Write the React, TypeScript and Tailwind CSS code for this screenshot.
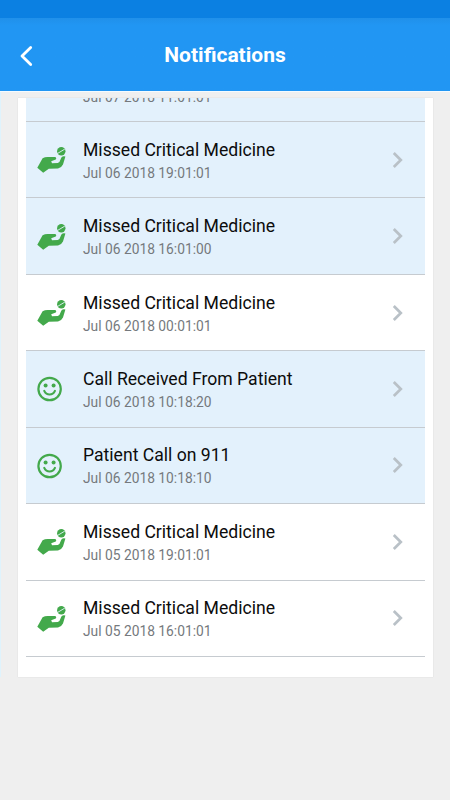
import React from "react";

type NotificationKind = "medicine" | "call";

type NotificationItem = {
  kind: NotificationKind;
  title: string;
  date: string;
  unread: boolean;
};

const notifications: NotificationItem[] = [
  { kind: "medicine", title: "Missed Critical Medicine", date: "Jul 06 2018 19:01:01", unread: true },
  { kind: "medicine", title: "Missed Critical Medicine", date: "Jul 06 2018 16:01:00", unread: true },
  { kind: "medicine", title: "Missed Critical Medicine", date: "Jul 06 2018 00:01:01", unread: false },
  { kind: "call", title: "Call Received From Patient", date: "Jul 06 2018 10:18:20", unread: true },
  { kind: "call", title: "Patient Call on 911", date: "Jul 06 2018 10:18:10", unread: true },
  { kind: "medicine", title: "Missed Critical Medicine", date: "Jul 05 2018 19:01:01", unread: false },
  { kind: "medicine", title: "Missed Critical Medicine", date: "Jul 05 2018 16:01:01", unread: false },
];

function MedicineIcon() {
  return (
    <svg width="30" height="28" viewBox="0 0 30 28" fill="#43a94b" aria-hidden="true">
      <path d="M0.3 21.8 5.6 12.2 Q8 10.8 11 10.9 L18.4 11 Q20 12.2 18.8 13.4 L14.2 15.2 15 17.2 20.8 17 22.4 16 24.4 11.6 Q26.2 9.4 28.4 10.6 L26 18.6 Q24.6 21.8 21 22.4 L11.8 22.8 6.2 26.8 Z" />
      <circle cx="24.3" cy="5.2" r="4.2" />
      <path d="M20.8 7.3 27.8 3.1" stroke="#e3f2fd" strokeWidth="0.9" />
    </svg>
  );
}

function SmileIcon() {
  return (
    <svg width="26" height="26" viewBox="0 0 26 26" fill="none" stroke="#43a94b" aria-hidden="true">
      <circle cx="12.6" cy="13" r="11.2" strokeWidth="2.2" />
      <circle cx="8.6" cy="9.6" r="2" fill="#43a94b" stroke="none" />
      <circle cx="16.6" cy="9.6" r="2" fill="#43a94b" stroke="none" />
      <path d="M7.2 14.8 Q9 18.6 12.6 18.6 Q16.2 18.6 18 14.8" strokeWidth="2" strokeLinecap="round" />
    </svg>
  );
}

function NotificationRow({ item }: { item: NotificationItem }) {
  return (
    <li
      className={`flex h-[76.45px] shrink-0 items-center border-b border-[#c6cbd0] ${
        item.unread ? "bg-[#e3f1fc]" : "bg-white"
      }`}
    >
      <div className="flex w-[57px] shrink-0 pt-px pl-[10.5px]">
        {item.kind === "medicine" ? <MedicineIcon /> : <SmileIcon />}
      </div>
      <div className="flex-1 pt-0.5">
        <p className="text-[17.6px] leading-6 whitespace-nowrap text-[#0c0c0c]">{item.title}</p>
        <p className="text-[13.8px] leading-[22px] whitespace-nowrap text-[#75797d]">{item.date}</p>
      </div>
      <svg width="14" height="20" viewBox="0 0 14 20" fill="none" className="mr-5" aria-hidden="true">
        <path d="M2.8 3 9.8 10 2.8 17" stroke="#b9c1c7" strokeWidth="2.7" />
      </svg>
    </li>
  );
}

export default function App() {
  return (
    <div className="flex h-[800px] w-[450px] flex-col overflow-hidden bg-[#efefef] font-['Roboto',sans-serif]">
      <div className="h-[18px] shrink-0 bg-[#0b80e2]" />
      <header className="grid h-[73px] shrink-0 grid-cols-[60px_1fr_60px] items-center bg-[#2196f3] bg-linear-to-b from-[#2090ea] to-[#2196f3] to-10%">
        <button className="pl-[19px] pt-[3px]" aria-label="Back">
          <svg width="14" height="22" viewBox="0 0 14 22" fill="none" aria-hidden="true">
            <path d="M11.7 2.4 3 11 11.7 19.6" stroke="white" strokeWidth="2.8" strokeLinecap="round" strokeLinejoin="round" />
          </svg>
        </button>
        <h1 className="pt-0.5 text-center text-[21px] font-bold text-white">Notifications</h1>
      </header>
      <div className="h-px shrink-0 bg-[#f4fbff]" />

      <main className="h-[585px] shrink-0 border-l border-[#dff3fc] pl-[17px] pt-[6px]">
        <ul className="flex h-[579px] w-[415px] flex-col justify-end overflow-hidden bg-white px-2 pb-5 shadow-[0_0_1px_#ccc]">
          {/* row scrolled mostly out of view, only the bottom of its date is left */}
          <li className="flex min-h-0 flex-1 flex-col justify-end overflow-hidden border-b border-[#c6cbd0] bg-[#e3f1fc] pb-[13px] pl-[57px]">
            <p className="text-[13.8px] leading-[22px] whitespace-nowrap text-[#75797d]">Jul 07 2018 11:01:01</p>
          </li>
          {notifications.map((item) => (
            <NotificationRow key={item.date} item={item} />
          ))}
        </ul>
      </main>
    </div>
  );
}
